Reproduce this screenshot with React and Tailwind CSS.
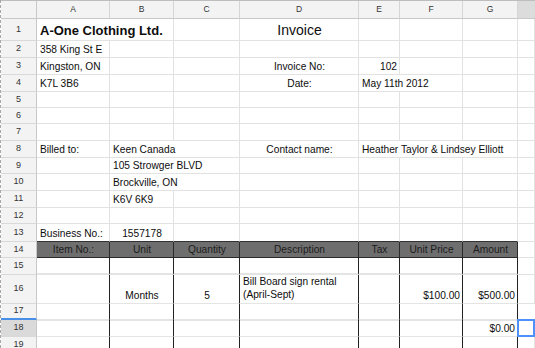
import React from 'react';

const GRID = 'grid grid-cols-[36px_73px_64px_66px_119px_41px_63px_55px_17px]';

const SPAN = { 1: 'col-span-1', 2: 'col-span-2', 3: 'col-span-3' };
const JUSTIFY = { left: 'justify-start', center: 'justify-center', right: 'justify-end' };

function Cell({ span = 1, align = 'left', className = '', children }) {
  return (
    <div
      className={`${SPAN[span]} flex items-end ${JUSTIFY[align]} pl-[3px] pr-[2px] pb-[1px] border-r border-b overflow-hidden whitespace-nowrap leading-[12px] ${className}`}
    >
      {children}
    </div>
  );
}

function Row({ h, num, head = 'bg-[#f3f3f3]', headLine = 'border-b-[#d9d9d9]', children }) {
  return (
    <div className={`${GRID} ${h}`}>
      <div
        className={`flex items-center justify-center border-r border-r-[#c8c8c8] border-b text-[9px] text-[#333] ${head} ${headLine}`}
      >
        {num}
      </div>
      {children}
    </div>
  );
}

const g = 'border-[#e2e2e2]';
// cells inside the invoice table get black right edges
const t = 'border-r-[#222] border-b-[#e4e4e4]';

function Blank({ n, cls = g }) {
  return Array.from({ length: n }, (_, i) => <Cell key={i} className={cls} />);
}

function TableRow({ h, num, cells, head, headLine, extraH }) {
  return (
    <Row h={h} num={num} head={head} headLine={headLine}>
      {cells.map((c, i) => (
        <Cell key={i} align={c.align} className={`${t} ${c.className || ''}`}>
          {c.text}
        </Cell>
      ))}
      {extraH || <Cell className={g} />}
    </Row>
  );
}

const headers = ['Item No.:', 'Unit', 'Quantity', 'Description', 'Tax', 'Unit Price', 'Amount'];

export default function App() {
  return (
    <div className="w-[535px] h-[348px] overflow-hidden bg-white border-l border-dashed border-[#a8a8a8] text-[10.2px] text-[#0d0d0d] font-['Liberation_Sans',Arial,sans-serif]">
      {/* column letters */}
      <div className={`${GRID} h-[19px] border-t border-[#bdbdbd] bg-[#f3f3f3]`}>
        <div className="border-r border-b border-r-[#c8c8c8] border-b-[#c8c8c8]" />
        {['A', 'B', 'C', 'D', 'E', 'F', 'G'].map((l) => (
          <div key={l} className="flex items-center justify-center border-r border-b border-[#d6d6d6] border-b-[#c8c8c8] text-[8.5px] text-[#333]">
            {l}
          </div>
        ))}
        <div className="bg-[#dcdcdc] border-b border-[#c8c8c8]" />
      </div>

      <Row h="h-[22px]" num="1">
        <Cell span={2} className={`${g} pb-[2px]`}>
          <span className="font-bold text-[13px] leading-[15px]">A-One Clothing Ltd.</span>
        </Cell>
        <Cell className={g} />
        <Cell align="center" className={`${g} pb-[2px]`}>
          <span className="text-[14px] leading-[16px]">Invoice</span>
        </Cell>
        <Blank n={4} />
      </Row>

      <Row h="h-[17px]" num="2">
        <Cell className={g}>358 King St E</Cell>
        <Blank n={7} />
      </Row>

      <Row h="h-[17px]" num="3">
        <Cell className={g}>Kingston, ON</Cell>
        <Blank n={2} />
        <Cell align="center" className={g}>Invoice No:</Cell>
        <Cell align="right" className={g}>102</Cell>
        <Blank n={3} />
      </Row>

      <Row h="h-[17px]" num="4">
        <Cell className={g}>K7L 3B6</Cell>
        <Blank n={2} />
        <Cell align="center" className={g}>Date:</Cell>
        <Cell span={2} className={g}>May 11th 2012</Cell>
        <Blank n={2} />
      </Row>

      <Row h="h-[16px]" num="5"><Blank n={8} /></Row>
      <Row h="h-[16px]" num="6"><Blank n={8} /></Row>
      <Row h="h-[17px]" num="7"><Blank n={8} /></Row>

      <Row h="h-[17px]" num="8">
        <Cell className={g}>Billed to:</Cell>
        <Cell span={2} className={g}>Keen Canada</Cell>
        <Cell align="center" className={g}>Contact name:</Cell>
        <Cell span={3} className={g}>Heather Taylor &amp; Lindsey Elliott</Cell>
        <Cell className={g} />
      </Row>

      <Row h="h-[16px]" num="9">
        <Cell className={g} />
        <Cell span={2} className={g}>105 Strowger BLVD</Cell>
        <Blank n={5} />
      </Row>

      <Row h="h-[17px]" num="10">
        <Cell className={g} />
        <Cell span={2} className={g}>Brockville, ON</Cell>
        <Blank n={5} />
      </Row>

      <Row h="h-[17px]" num="11">
        <Cell className={g} />
        <Cell className={g}>K6V 6K9</Cell>
        <Blank n={6} />
      </Row>

      <Row h="h-[16px]" num="12"><Blank n={8} /></Row>

      <Row h="h-[18px]" num="13">
        <Cell className="border-r-[#e2e2e2] border-b-[#333]">Business No.:</Cell>
        <Cell align="center" className="border-r-[#e2e2e2] border-b-[#333]">1557178</Cell>
        <Blank n={5} cls="border-r-[#e2e2e2] border-b-[#333]" />
        <Cell className={g} />
      </Row>

      {/* table header */}
      <Row h="h-[16px]" num="14">
        {headers.map((hd) => (
          <Cell key={hd} align="center" className="bg-[#6e6e6e] border-[#2a2a2a] text-[#1c1c1c]">
            {hd}
          </Cell>
        ))}
        <Cell className={g} />
      </Row>

      <TableRow h="h-[17px]" num="15" cells={Array.from({ length: 7 }, () => ({ className: 'border-b-2' }))} />

      <TableRow
        h="h-[29px]"
        num="16"
        cells={[
          {},
          { text: 'Months', align: 'center' },
          { text: '5', align: 'center' },
          {
            text: (
              <span className="whitespace-normal leading-[13px] pb-[1px]">
                Bill Board sign rental
                <br />
                (April-Sept)
              </span>
            ),
          },
          {},
          { text: '$100.00', align: 'right' },
          { text: '$500.00', align: 'right' },
        ]}
      />

      <TableRow
        h="h-[16px]"
        num="17"
        headLine="border-b-[3px] border-b-[#4a8fe7]"
        cells={Array.from({ length: 7 }, () => ({ className: 'border-b-2' }))}
        extraH={<div className="border-b-2 border-[#e4e4e4]" />}
      />

      <TableRow
        h="h-[17px]"
        num="18"
        head="bg-[#dadada]"
        cells={[{}, {}, {}, {}, {}, {}, { text: '$0.00', align: 'right' }]}
        extraH={
          <div className="relative border-b border-[#e2e2e2]">
            <div className="absolute -left-[1px] -top-[1px] right-0 -bottom-[1px] border-2 border-[#4d90fe]" />
          </div>
        }
      />

      <TableRow h="h-[17px]" num="19" cells={Array.from({ length: 7 }, () => ({}))} />
    </div>
  );
}
